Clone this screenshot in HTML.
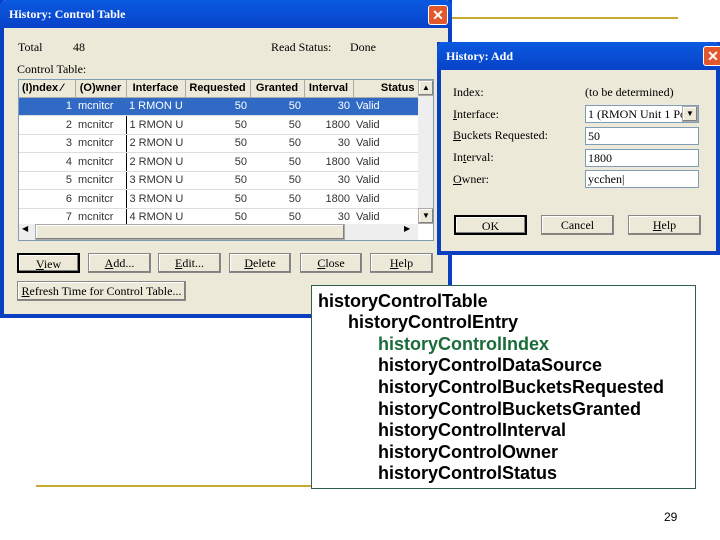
<!DOCTYPE html>
<html><head><style>
*{margin:0;padding:0;box-sizing:border-box}
body{width:720px;height:540px;background:#fff;position:relative;overflow:hidden;font-family:"Liberation Serif",serif;font-size:12px;color:#000}
.a{position:absolute}
.win{background:#ece9d8;border:4px solid #0a3fc0;border-top:0}
.title{background:linear-gradient(#0a5ae0,#0842c8);color:#fff;font-weight:bold;font-size:12px;}
.x{background:#e0582c;border:1px solid #fff;border-radius:3px;color:#fff;font:bold 14px "Liberation Sans",sans-serif;text-align:center;line-height:18px}
.btn{background:#ece9d8;border:1px solid #000;box-shadow:inset -1px -1px #808080,inset 1px 1px #fff;text-align:center;font-size:12px;line-height:19px}
table{border-collapse:collapse;font-family:"Liberation Sans",sans-serif;font-size:11px}
td{height:18.5px;border-bottom:1px solid #ddd;padding:0 3px;white-space:nowrap;overflow:hidden;color:#333}
th{height:17px;background:#ece9d8;border-right:1px solid #aaa;border-bottom:1px solid #aaa;font-weight:bold;font-size:11px;padding:0 3px}
.r{text-align:right}
tr.sel td{background:#316ac5;color:#fff}
.in{background:#fff;border:1px solid #7f9db9;font-size:12px;padding-left:2px;line-height:16px}
.big{font:bold 18px "Liberation Sans",sans-serif;position:absolute;white-space:nowrap;line-height:18px}
</style></head><body>
<div class="a" style="left:450px;top:17px;width:228px;height:2px;background:#c8a830"></div>
<div class="a" style="left:36px;top:485px;width:275px;height:2px;background:#c8a830"></div>

<div class="a win" style="left:0;top:0;width:452px;height:318px">
 <div class="a title" style="left:-4px;top:0;width:452px;height:28px;padding:7px 0 0 9px;border-radius:6px 6px 0 0">History: Control Table</div>
 <div class="a x" style="left:424px;top:5px;width:20px;height:20px">✕</div>
 <div class="a" style="left:14px;top:40px">Total</div>
 <div class="a" style="left:69px;top:40px">48</div>
 <div class="a" style="left:267px;top:40px">Read Status:</div>
 <div class="a" style="left:346px;top:40px">Done</div>
 <div class="a" style="left:13px;top:62px">Control Table:</div>
 <div class="a" style="left:14px;top:79px;width:416px;height:162px;background:#fff;border:1px solid #7f9db9;overflow:hidden">
  <table style="width:399px;table-layout:fixed">
   <colgroup><col style="width:56px"><col style="width:51px"><col style="width:59px"><col style="width:65px"><col style="width:54px"><col style="width:49px"><col style="width:65px"></colgroup>
   <tr><th style="text-align:left">(I)ndex ⁄</th><th>(O)wner</th><th>Interface</th><th>Requested</th><th>Granted</th><th>Interval</th><th class="r">Status</th></tr>
   <tr class="sel"><td class="r">1</td><td>mcnitcr</td><td>1 RMON U</td><td class="r">50</td><td class="r">50</td><td class="r">30</td><td>Valid</td></tr>
   <tr><td class="r">2</td><td>mcnitcr</td><td style="border-left:1px solid #000">1 RMON U</td><td class="r">50</td><td class="r">50</td><td class="r">1800</td><td>Valid</td></tr>
   <tr><td class="r">3</td><td>mcnitcr</td><td style="border-left:1px solid #000">2 RMON U</td><td class="r">50</td><td class="r">50</td><td class="r">30</td><td>Valid</td></tr>
   <tr><td class="r">4</td><td>mcnitcr</td><td style="border-left:1px solid #000">2 RMON U</td><td class="r">50</td><td class="r">50</td><td class="r">1800</td><td>Valid</td></tr>
   <tr><td class="r">5</td><td>mcnitcr</td><td style="border-left:1px solid #000">3 RMON U</td><td class="r">50</td><td class="r">50</td><td class="r">30</td><td>Valid</td></tr>
   <tr><td class="r">6</td><td>mcnitcr</td><td style="border-left:1px solid #000">3 RMON U</td><td class="r">50</td><td class="r">50</td><td class="r">1800</td><td>Valid</td></tr>
   <tr><td class="r">7</td><td>mcnitcr</td><td style="border-left:1px solid #000">4 RMON U</td><td class="r">50</td><td class="r">50</td><td class="r">30</td><td>Valid</td></tr>
  </table>
  <div class="a" style="left:399px;top:0;width:16px;height:144px;background:#eee"></div>
  <div class="a btn" style="left:399px;top:0;width:16px;height:16px;font-size:8px;line-height:14px;border-color:#aaa">▲</div>
  <div class="a btn" style="left:399px;top:128px;width:16px;height:16px;font-size:8px;line-height:14px;border-color:#aaa">▼</div>
  <div class="a" style="left:0;top:144px;width:399px;height:16px;background:#eee"></div>
  <div class="a btn" style="left:16px;top:144px;width:310px;height:16px;border-color:#aaa"></div>
  <div class="a" style="left:385px;top:144px;font-size:8px">▶</div>
  <div class="a" style="left:3px;top:144px;font-size:8px">◀</div>
 </div>
 <div class="a btn" style="left:13px;top:253px;width:63px;height:20px;border-width:2px"><u>V</u>iew</div>
 <div class="a btn" style="left:84px;top:253px;width:63px;height:20px;border-color:#888"><u>A</u>dd...</div>
 <div class="a btn" style="left:154px;top:253px;width:63px;height:20px;border-color:#888"><u>E</u>dit...</div>
 <div class="a btn" style="left:225px;top:253px;width:62px;height:20px;border-color:#888"><u>D</u>elete</div>
 <div class="a btn" style="left:296px;top:253px;width:62px;height:20px;border-color:#888"><u>C</u>lose</div>
 <div class="a btn" style="left:366px;top:253px;width:63px;height:20px;border-color:#888"><u>H</u>elp</div>
 <div class="a btn" style="left:13px;top:281px;width:169px;height:20px;border-color:#888"><u>R</u>efresh Time for Control Table...</div>
</div>

<div class="a win" style="left:437px;top:42px;width:283px;height:213px">
 <div class="a title" style="left:-4px;top:0;width:283px;height:28px;padding:7px 0 0 9px;border-radius:6px 6px 0 0">History: Add</div>
 <div class="a x" style="left:262px;top:4px;width:20px;height:20px">✕</div>
 <div class="a" style="left:12px;top:43px">Index:</div>
 <div class="a" style="left:144px;top:43px">(to be determined)</div>
 <div class="a" style="left:12px;top:65px"><u>I</u>nterface:</div>
 <div class="a in" style="left:144px;top:63px;width:114px;height:18px">1 (RMON Unit 1 Po</div>
 <div class="a btn" style="left:241px;top:64px;width:16px;height:16px;font-size:8px;line-height:14px;border-color:#aaa">▼</div>
 <div class="a" style="left:12px;top:86px"><u>B</u>uckets Requested:</div>
 <div class="a in" style="left:144px;top:85px;width:114px;height:18px">50</div>
 <div class="a" style="left:12px;top:108px">In<u>t</u>erval:</div>
 <div class="a in" style="left:144px;top:107px;width:114px;height:18px">1800</div>
 <div class="a" style="left:12px;top:130px"><u>O</u>wner:</div>
 <div class="a in" style="left:144px;top:128px;width:114px;height:18px">ycchen|</div>
 <div class="a btn" style="left:13px;top:173px;width:73px;height:20px;border-width:2px">OK</div>
 <div class="a btn" style="left:100px;top:173px;width:73px;height:20px;border-color:#888">Cancel</div>
 <div class="a btn" style="left:187px;top:173px;width:73px;height:20px;border-color:#888"><u>H</u>elp</div>
</div>

<div class="a" style="left:311px;top:285px;width:385px;height:204px;background:#fff;border:1px solid #2f5f4f"></div>
<div class="big" style="left:318px;top:292px">historyControlTable</div>
<div class="big" style="left:348px;top:313px">historyControlEntry</div>
<div class="big" style="left:378px;top:335px;color:#1a6b3a">historyControlIndex</div>
<div class="big" style="left:378px;top:356px">historyControlDataSource</div>
<div class="big" style="left:378px;top:378px">historyControlBucketsRequested</div>
<div class="big" style="left:378px;top:400px">historyControlBucketsGranted</div>
<div class="big" style="left:378px;top:421px">historyControlInterval</div>
<div class="big" style="left:378px;top:443px">historyControlOwner</div>
<div class="big" style="left:378px;top:464px">historyControlStatus</div>
<div class="a" style="left:664px;top:510px;font:12px 'Liberation Sans',sans-serif">29</div>
</body></html>
